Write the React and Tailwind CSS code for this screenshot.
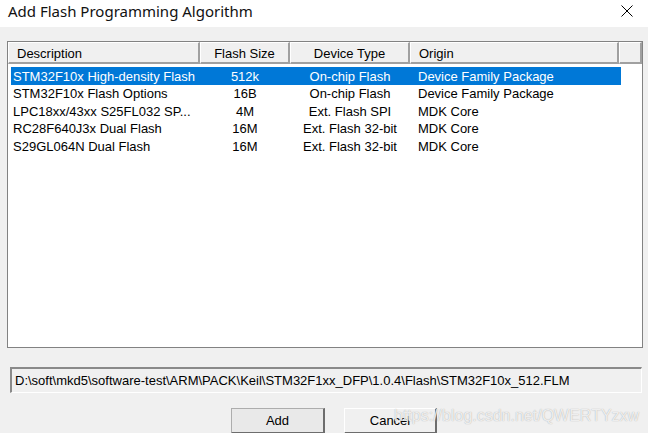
import React from "react";

const rows = [
  ["STM32F10x High-density Flash", "512k", "On-chip Flash", "Device Family Package"],
  ["STM32F10x Flash Options", "16B", "On-chip Flash", "Device Family Package"],
  ["LPC18xx/43xx S25FL032 SP...", "4M", "Ext. Flash SPI", "MDK Core"],
  ["RC28F640J3x Dual Flash", "16M", "Ext. Flash 32-bit", "MDK Core"],
  ["S29GL064N Dual Flash", "16M", "Ext. Flash 32-bit", "MDK Core"],
];

const headCell =
  "h-full flex items-center pt-[3px] border-t border-l border-t-white border-l-white border-r-2 border-b-2 border-r-[#a0a0a0] border-b-[#a0a0a0] bg-[#f0f0f0]";

export default function App() {
  return (
    <div className="relative h-[433px] w-[648px] overflow-hidden bg-[#f0f0f0] font-['Liberation_Sans',Arial,sans-serif] text-[13px] text-black">
      {/* title bar */}
      <div className="flex h-[27px] items-center justify-between bg-white pl-[8px] pr-[15px]">
        <span className="mb-[5px] font-['Noto_Sans',sans-serif] text-[15px] leading-none text-[#111]">
          Add Flash Programming Algorithm
        </span>
        <svg width="12" height="12" viewBox="0 0 12 12" className="mb-[5px]">
          <path d="M0.5 0.5 L11.5 11.5 M11.5 0.5 L0.5 11.5" stroke="#000" strokeWidth="1" />
        </svg>
      </div>

      <div className="px-[7px] pt-[14px]">
        {/* list view */}
        <div className="h-[307px] w-[636px] border border-[#828282] bg-white">
          <div className="flex h-[22px]">
            <div className={`${headCell} w-[192px] pl-[8px]`}>Description</div>
            <div className={`${headCell} w-[90px] justify-center`}>Flash Size</div>
            <div className={`${headCell} w-[120px] justify-center`}>Device Type</div>
            <div className={`${headCell} w-[209px] pl-[8px]`}>Origin</div>
            <div className={`${headCell} flex-1`} />
          </div>
          <div className="pt-[3px]">
            {rows.map((r, i) => (
              <div
                key={i}
                className={`ml-[3px] flex h-[17.5px] w-[610px] items-center pt-[1px] ${
                  i === 0 ? "bg-[#0078d7] text-white" : ""
                }`}
              >
                <div className="w-[189px] truncate pl-[2px]">{r[0]}</div>
                <div className="w-[90px] text-center">{r[1]}</div>
                <div className="w-[120px] text-center">{r[2]}</div>
                <div className="pl-[8px]">{r[3]}</div>
              </div>
            ))}
          </div>
        </div>

        {/* path field */}
        <div className="ml-[3px] mt-[19px] flex h-[26px] w-[632px] items-center border-t-2 border-l-2 border-b border-r border-t-[#8a8a8a] border-l-[#8a8a8a] border-b-white border-r-white bg-[#f0f0f0] pl-[3px]">
          D:\soft\mkd5\software-test\ARM\PACK\Keil\STM32F1xx_DFP\1.0.4\Flash\STM32F10x_512.FLM
        </div>

        {/* buttons */}
        <div className="mt-[15px] flex gap-[19px] pl-[224px]">
          <button className="h-[26px] w-[94px] border border-t-[#adadad] border-l-[#adadad] border-r-2 border-b-2 border-r-[#6d6d6d] border-b-[#6d6d6d] bg-[#e9e9e9] text-[13px]">
            Add
          </button>
          <button className="h-[26px] w-[93px] border border-t-white border-l-white border-r-2 border-b-2 border-r-[#6d6d6d] border-b-[#6d6d6d] bg-[#f0f0f0] text-[13px]">
            Cancel
          </button>
        </div>
      </div>

      {/* watermark */}
      <div className="absolute left-[394px] top-[404px] whitespace-nowrap text-[16px] text-white/80 [text-shadow:0_0_1px_#9a9a9a]">
        https://blog.csdn.net/QWERTYzxw
      </div>
    </div>
  );
}
